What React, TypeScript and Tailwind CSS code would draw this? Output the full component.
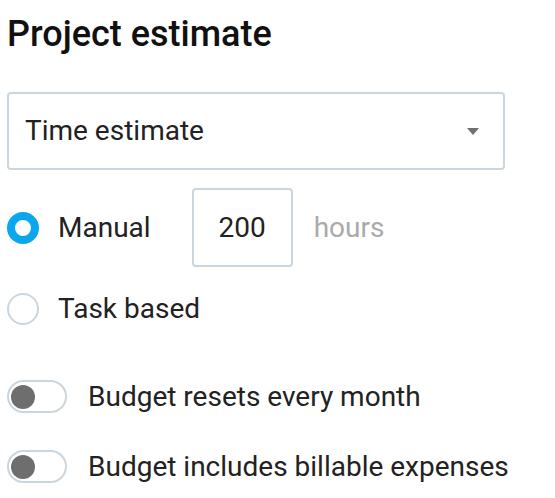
import React from 'react';

function Radio({ checked, label }: { checked?: boolean; label: string }) {
  return (
    <div className="flex items-center gap-[19px]">
      {checked ? (
        <span className="w-[32px] h-[32px] rounded-full border-[8px] border-[#0aa7ef] bg-white" />
      ) : (
        <span className="w-[32px] h-[32px] rounded-full border-2 border-[#c9d6df] bg-white" />
      )}
      <span className="text-[28px] leading-[32px] text-[#222]">{label}</span>
    </div>
  );
}

function Toggle({ label }: { label: string }) {
  return (
    <div className="flex items-center gap-[21px]">
      <span className="relative w-[60px] h-[33px] rounded-full border-2 border-[#c9d6df] bg-white">
        <span className="absolute left-[2px] top-[3px] w-[24px] h-[24px] rounded-full bg-[#6e6e6e]" />
      </span>
      <span className="text-[28px] leading-[32px] text-[#222]">{label}</span>
    </div>
  );
}

export default function App() {
  return (
    <div className="bg-white min-h-[498px] pl-[7px] pt-[10px] font-['Roboto',sans-serif]">
      <h1 className="text-[36px] font-medium leading-[48px] text-[#111]">Project estimate</h1>

      {/* Select */}
      <div className="mt-[34px] w-[498px] h-[78px] flex items-center justify-between pl-[16px] pr-[24px] border-2 border-[#c9d6df] rounded-[4px]">
        <span className="text-[28px] text-[#222]">Time estimate</span>
        <svg width="12" height="7" viewBox="0 0 12 7">
          <path d="M0 0h12L6 7z" fill="#707070" />
        </svg>
      </div>

      {/* Manual row */}
      <div className="mt-[18px] flex items-center">
        <Radio checked label="Manual" />
        <div className="ml-[41px] w-[101px] h-[79px] flex items-center justify-center border-2 border-[#c9d6df] rounded-[4px]">
          <span className="text-[28px] text-[#222]">200</span>
        </div>
        <span className="ml-[21px] text-[28px] text-[#aaaaaa]">hours</span>
      </div>

      <div className="mt-[26px]">
        <Radio label="Task based" />
      </div>

      <div className="mt-[55px]">
        <Toggle label="Budget resets every month" />
      </div>

      <div className="mt-[37px]">
        <Toggle label="Budget includes billable expenses" />
      </div>
    </div>
  );
}
